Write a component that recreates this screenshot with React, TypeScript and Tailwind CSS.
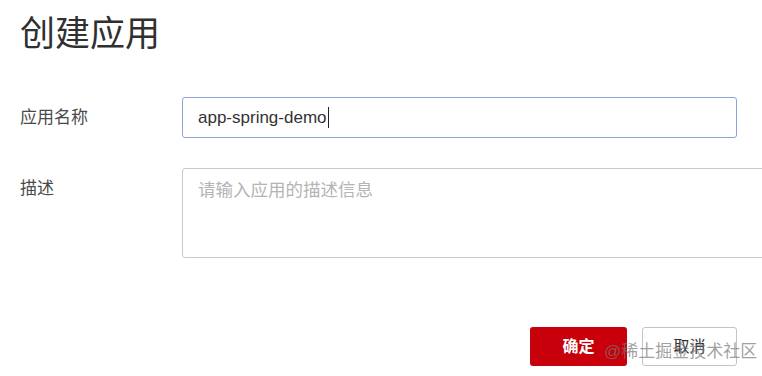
export default function App() {
    return (
        <div className="relative w-[762px] h-[376px] overflow-hidden bg-white pl-[20px] font-['Liberation_Sans','Noto_Sans_CJK_SC',sans-serif]">
            {/* 标题 */}
            <h1 className="mt-[16px] text-[35px] leading-none font-normal text-[#303030]">
                创建应用
            </h1>

            {/* 应用名称 */}
            <div className="mt-[46px] flex items-center">
                <label className="w-[162px] shrink-0 text-[17px] text-[#4a4a4a]">应用名称</label>
                <div className="flex h-[41px] w-[555px] shrink-0 items-center rounded-[3px] border border-[#8fa2d8] px-[15px] text-[17px] text-[#333]">
                    <span>app-spring-demo</span>
                    <span className="ml-px h-[21px] w-px bg-[#222]" />
                </div>
            </div>

            {/* 描述 */}
            <div className="mt-[30px] flex items-start">
                <label className="w-[162px] shrink-0 pt-[9px] text-[17px] leading-[24px] text-[#4a4a4a]">描述</label>
                <div className="h-[90px] w-[620px] shrink-0 rounded-[3px] border border-[#c9c9c9] px-[15px] pt-[9px] text-[17.5px] leading-[24px] text-[#b4b4b4]">
                    请输入应用的描述信息
                </div>
            </div>

            {/* 按钮 */}
            <div className="mt-[69px] flex w-[717px] justify-end gap-[15px]">
                <button className="h-[39px] w-[97px] rounded-[3px] bg-[#c7000b] text-[16px] font-bold text-white">
                    确定
                </button>
                <button className="h-[39px] w-[95px] rounded-[3px] border border-[#c4c4c4] bg-white text-[16px] text-[#333]">
                    取消
                </button>
            </div>

            {/* 水印 */}
            <div className="absolute left-[604px] top-[341px] text-[17px] leading-[22px] text-[#777]/70 whitespace-nowrap">
                @稀土掘金技术社区
            </div>
        </div>
    );
}
